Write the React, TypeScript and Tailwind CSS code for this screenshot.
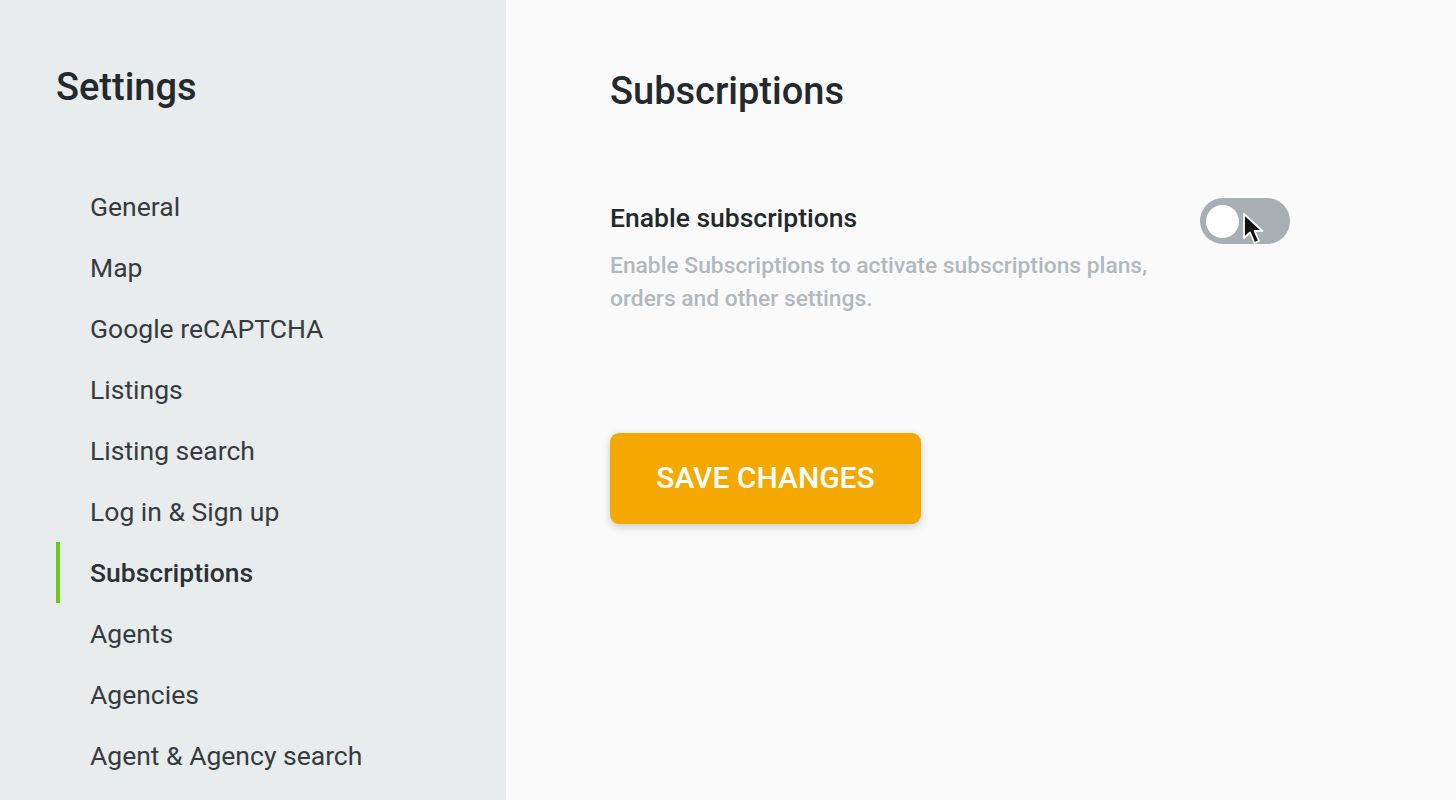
import React from 'react';

const navItems = [
  'General',
  'Map',
  'Google reCAPTCHA',
  'Listings',
  'Listing search',
  'Log in & Sign up',
  'Subscriptions',
  'Agents',
  'Agencies',
  'Agent & Agency search',
];

const App: React.FC = () => {
  const active = 'Subscriptions';

  return (
    <div className="flex h-[800px] w-full overflow-hidden bg-[#fafafa] font-['Roboto',sans-serif]">
      {/* sidebar */}
      <aside className="w-[506px] shrink-0 bg-[#e8ecec] pl-[56px] pt-[64px]">
        <h1 className="text-[38px] font-medium leading-[46px] text-[#23292d]">Settings</h1>
        <nav className="mt-[66px]">
          <ul>
            {navItems.map((item) => {
              const isActive = item === active;
              return (
                <li key={item} className="flex h-[61px] items-center">
                  <span
                    className={`h-[61px] w-[4px] ${isActive ? 'bg-[#66cc1a]' : 'bg-transparent'}`}
                  />
                  <span
                    className={`pl-[30px] text-[26.5px] ${
                      isActive ? 'font-medium text-[#2c3135]' : 'text-[#363b3f]'
                    }`}
                  >
                    {item}
                  </span>
                </li>
              );
            })}
          </ul>
        </nav>
      </aside>

      {/* main */}
      <main className="flex-1 pl-[104px] pt-[68px]">
        <h2 className="text-[38px] font-medium leading-[46px] text-[#23292d]">Subscriptions</h2>

        <div className="mt-[88px] flex w-[680px] items-start justify-between">
          <div>
            <div className="text-[26.5px] font-medium leading-[32px] text-[#23282b]">
              Enable subscriptions
            </div>
            <p className="mt-[15px] w-[560px] text-[22.8px] font-medium leading-[33px] text-[#b1b9bd]">
              Enable Subscriptions to activate subscriptions plans, orders and other settings.
            </p>
          </div>
          <div className="relative mt-[-4px]">
            <button className="flex h-[46px] w-[90px] items-center rounded-full bg-[#a7afb2] px-[6px]">
              <span className="h-[33px] w-[33px] rounded-full bg-white" />
            </button>
            <svg
              className="absolute left-[42px] top-[14px]"
              width="22"
              height="34"
              viewBox="0 0 22 34"
            >
              <path
                d="M2 2 L2 26 L8 20.5 L12.5 31 L17 29 L12.5 19 L20.5 19 Z"
                fill="#111"
                stroke="#fff"
                strokeWidth="1.8"
                strokeLinejoin="round"
              />
            </svg>
          </div>
        </div>

        <button className="mt-[118px] h-[91px] w-[311px] rounded-[9px] bg-[#f5a900] pb-[3px] text-[30px] font-medium text-white shadow-[0_3px_8px_rgba(0,0,0,0.18)]">
          SAVE CHANGES
        </button>
      </main>
    </div>
  );
};

export default App;
